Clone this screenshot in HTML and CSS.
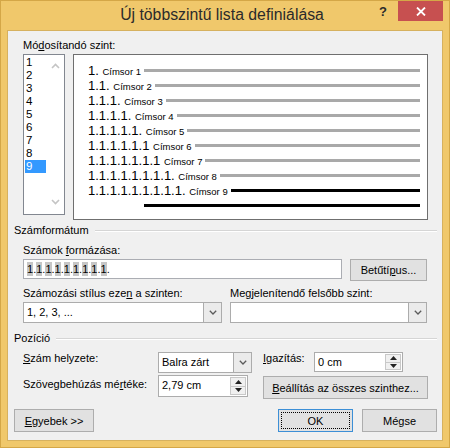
FILE: index.html
```html
<!DOCTYPE html>
<html lang="hu">
<head>
<meta charset="utf-8">
<title>Új többszintű lista definiálása</title>
<link rel="stylesheet" href="styles.css">
</head>
<body>
<div class="window">
  <div class="titlebar">
    <div></div>
    <div class="title">Új többszintű lista definiálása</div>
    <div class="controls">
      <span class="help">?</span>
      <div class="close"><svg width="10" height="9" viewBox="0 0 10 9"><path d="M1 0.5L9 8.5M9 0.5L1 8.5" stroke="#fff" stroke-width="1.8" fill="none"/></svg></div>
    </div>
  </div>

  <div class="client">
    <div class="sec-top">
      <div class="lbl">Mó<u>d</u>osítandó szint:</div>
      <div class="level-row">
        <div class="listbox">
          <div class="items">
            <div class="item">1</div>
            <div class="item">2</div>
            <div class="item">3</div>
            <div class="item">4</div>
            <div class="item">5</div>
            <div class="item">6</div>
            <div class="item">7</div>
            <div class="item">8</div>
            <div class="item sel">9</div>
          </div>
          <div class="vscroll">
            <svg width="9" height="6" viewBox="0 0 9 6"><path d="M1 5L4.5 1.5L8 5" stroke="#c4c4c4" stroke-width="1.6" fill="none"/></svg>
            <svg width="9" height="6" viewBox="0 0 9 6"><path d="M1 1L4.5 4.5L8 1" stroke="#c4c4c4" stroke-width="1.6" fill="none"/></svg>
          </div>
        </div>
        <div class="preview">
          <div class="prow"><span class="num">1.</span><span class="cap">Címsor 1</span><div class="bar"></div></div>
          <div class="prow"><span class="num">1.1.</span><span class="cap">Címsor 2</span><div class="bar"></div></div>
          <div class="prow"><span class="num">1.1.1.</span><span class="cap">Címsor 3</span><div class="bar"></div></div>
          <div class="prow"><span class="num">1.1.1.1.</span><span class="cap">Címsor 4</span><div class="bar"></div></div>
          <div class="prow"><span class="num">1.1.1.1.1.</span><span class="cap">Címsor 5</span><div class="bar"></div></div>
          <div class="prow"><span class="num">1.1.1.1.1.1</span><span class="cap">Címsor 6</span><div class="bar"></div></div>
          <div class="prow"><span class="num">1.1.1.1.1.1.1</span><span class="cap">Címsor 7</span><div class="bar"></div></div>
          <div class="prow"><span class="num">1.1.1.1.1.1.1.1.</span><span class="cap">Címsor 8</span><div class="bar"></div></div>
          <div class="prow"><span class="num">1.1.1.1.1.1.1.1.1.</span><span class="cap">Címsor 9</span><div class="bar dark"></div></div>
          <div class="prow"><div class="bar dark indent"></div></div>
        </div>
      </div>
    </div>

    <div class="group g1"><span>Számformátum</span><div class="rule"></div></div>

    <div class="sec">
      <div class="lbl lbl-gap">Számok <u>f</u>ormázása:</div>
      <div class="fmt-row">
        <div class="field fmt"><span class="sh">1</span>.<span class="sh">1</span>.<span class="sh">1</span>.<span class="sh">1</span>.<span class="sh">1</span>.<span class="sh">1</span>.<span class="sh">1</span>.<span class="sh">1</span>.<span class="sh">1</span>.</div>
        <div class="btn font-btn">Betűtí<u>p</u>us...</div>
      </div>
      <div class="two-col">
        <div class="col">
          <div class="lbl lbl-gap">Számozási stílus eze<u>n</u> a szinten:</div>
          <div class="combo"><span class="ctext">1, 2, 3, ...</span><span class="drop"><svg width="8" height="5" viewBox="0 0 8 5"><path d="M0.8 0.8L4 4L7.2 0.8" stroke="#5a5a5a" stroke-width="1.3" fill="none"/></svg></span></div>
        </div>
        <div class="col">
          <div class="lbl lbl-gap">Me<u>g</u>jelenítendő felsőbb szint:</div>
          <div class="combo"><span class="ctext"></span><span class="drop"><svg width="8" height="5" viewBox="0 0 8 5"><path d="M0.8 0.8L4 4L7.2 0.8" stroke="#5a5a5a" stroke-width="1.3" fill="none"/></svg></span></div>
        </div>
      </div>
    </div>

    <div class="group g2"><span>Pozíció</span><div class="rule"></div></div>

    <div class="pos-grid">
      <div class="lbl plbl"><u>S</u>zám helyzete:</div>
      <div class="combo small-combo"><span class="ctext">Balra zárt</span><span class="drop"><svg width="8" height="5" viewBox="0 0 8 5"><path d="M0.8 0.8L4 4L7.2 0.8" stroke="#5a5a5a" stroke-width="1.3" fill="none"/></svg></span></div>
      <div class="align-cell">
        <div class="lbl plbl align-lbl"><u>I</u>gazítás:</div>
        <div class="spin align-spin"><span class="ctext">0 cm</span><span class="spinbtns"><span class="sb"><svg width="7" height="4" viewBox="0 0 7 4"><path d="M0 4L3.5 0L7 4Z" fill="#222"/></svg></span><span class="sb"><svg width="7" height="4" viewBox="0 0 7 4"><path d="M0 0L3.5 4L7 0Z" fill="#222"/></svg></span></span></div>
      </div>
      <div class="lbl plbl2">Szövegbehúzás mé<u>r</u>téke:</div>
      <div class="spin indent-spin"><span class="ctext">2,79 cm</span><span class="spinbtns"><span class="sb"><svg width="7" height="4" viewBox="0 0 7 4"><path d="M0 4L3.5 0L7 4Z" fill="#222"/></svg></span><span class="sb"><svg width="7" height="4" viewBox="0 0 7 4"><path d="M0 0L3.5 4L7 0Z" fill="#222"/></svg></span></span></div>
      <div class="btn all-btn"><u>B</u>eállítás az összes szinthez...</div>
    </div>

    <div class="bottom">
      <div class="btn more-btn"><u>E</u>gyebek &gt;&gt;</div>
      <div class="spacer"></div>
      <div class="btn ok-btn"><span class="focus">OK</span></div>
      <div class="btn">Mégse</div>
    </div>
  </div>
</div>
</body>
</html>
```
FILE: styles.css
```css
html, body {
  margin: 0;
  padding: 0;
}

.window {
  width: 450px;
  height: 448px;
  box-sizing: border-box;
  border: 1px solid #d4a747;
  background: #f0c86b;
  display: flex;
  flex-direction: column;
  font-family: "Liberation Sans", Arial, sans-serif;
  font-size: 11px;
  color: #000;
}

.titlebar {
  height: 29px;
  flex: none;
  display: grid;
  grid-template-columns: 1fr auto 1fr;
  padding-right: 6px;
}

.title {
  font-size: 15.8px;
  line-height: 27px;
  color: #2b2b2b;
  white-space: nowrap;
}

.controls {
  justify-self: end;
  display: flex;
  align-items: flex-start;
}

.help {
  font-size: 13px;
  font-weight: bold;
  line-height: 16px;
  margin-top: 3px;
  margin-right: 11px;
  color: #2b2b2b;
}

.close {
  width: 45px;
  height: 20px;
  background: #c75050;
  display: flex;
  align-items: center;
  justify-content: center;
}

.client {
  flex: 1;
  margin: 0 6px 6px;
  background: #f0f0f0;
  border: 1px solid #d6b15f;
  padding-top: 7px;
  display: flex;
  flex-direction: column;
}

.lbl {
  line-height: 15px;
  white-space: nowrap;
}

u {
  text-decoration: underline;
  text-underline-offset: 1px;
}

.sec-top {
  padding-left: 15px;
}

.level-row {
  display: flex;
  align-items: flex-start;
  margin-top: 1px;
}

.listbox {
  width: 42px;
  height: 161px;
  box-sizing: border-box;
  border: 1px solid #828790;
  background: #fff;
  padding: 1px;
  display: flex;
}

.items {
  width: 21px;
}

.item {
  height: 13px;
  line-height: 13px;
  padding-left: 1px;
  font-size: 11.5px;
}

.item.sel {
  background: #3399ff;
  color: #fff;
}

.vscroll {
  flex: 1;
  display: flex;
  flex-direction: column;
  justify-content: space-between;
  align-items: center;
  padding: 7px 0 8px 1px;
}

.vscroll svg {
  display: block;
}

.preview {
  margin-left: 8px;
  width: 355px;
  height: 166px;
  box-sizing: border-box;
  border: 1px solid #6f6f6f;
  background: #fff;
  padding: 8px 7px 0 14px;
}

.prow {
  display: flex;
  align-items: baseline;
  height: 15px;
}

.num {
  font-size: 13px;
  line-height: 15px;
  white-space: nowrap;
}

.cap {
  font-size: 9.5px;
  line-height: 15px;
  margin-left: 3.6px;
  white-space: nowrap;
}

.bar {
  flex: 1;
  height: 3px;
  background: #a9a9a9;
  align-self: flex-start;
  margin-top: 6px;
  margin-left: 3px;
}

.bar.dark {
  background: #000;
}

.bar.indent {
  margin-left: 56px;
}

.group {
  display: flex;
  align-items: flex-start;
  padding-left: 6px;
  padding-right: 5px;
  line-height: 15px;
}

.group .rule {
  flex: 1;
  margin-top: 7px;
  margin-left: 6px;
  border-top: 1px solid #d5d5d5;
  border-bottom: 1px solid #fff;
}

.g1 {
  margin-top: 3px;
}

.g2 {
  margin-top: 8px;
}

.sec {
  padding-left: 15px;
}

.lbl-gap {
  margin-top: 5px;
  margin-bottom: 1px;
}

.fmt-row {
  display: flex;
  align-items: flex-start;
}

.field {
  box-sizing: border-box;
  border: 1px solid #abadb3;
  background: #fff;
}

.fmt {
  width: 319px;
  height: 20px;
  padding: 2px 0 0 3px;
  font-size: 11px;
  line-height: 15px;
  white-space: nowrap;
}

.sh {
  background: #c6c6c6;
  display: inline-block;
  line-height: 14px;
}

.btn {
  box-sizing: border-box;
  height: 23px;
  border: 1px solid #adadad;
  background: #e1e1e1;
  display: flex;
  align-items: center;
  justify-content: center;
  white-space: nowrap;
}

.font-btn {
  width: 77px;
  height: 22px;
  margin-left: 8px;
}

.two-col {
  display: flex;
  gap: 8px;
}

.col:first-child {
  width: 199px;
}

.col:last-child {
  width: 197px;
}

.combo,
.spin {
  box-sizing: border-box;
  height: 21px;
  border: 1px solid #acacac;
  background: #fff;
  display: flex;
}

.ctext {
  flex: 1;
  padding-left: 3px;
  line-height: 19px;
  white-space: nowrap;
}

.drop {
  width: 17px;
  border-left: 1px solid #acacac;
  background: #ebebeb;
  display: flex;
  align-items: center;
  justify-content: center;
}

.pos-grid {
  margin-top: 6px;
  padding-left: 15px;
  display: grid;
  grid-template-columns: 135px 94px 1fr;
  grid-template-rows: 20px 23px;
  row-gap: 3px;
}

.plbl {
  align-self: start;
  margin-top: -1px;
}

.plbl2 {
  align-self: start;
  margin-top: 2px;
}

.small-combo {
  height: 21px;
}

.align-cell {
  margin-left: 11px;
  display: flex;
  align-items: flex-start;
}

.align-lbl {
  width: 51px;
}

.align-spin {
  width: 89px;
  height: 20px;
}

.indent-spin {
  width: 90px;
  height: 22px;
}

.spinbtns {
  width: 16px;
  display: flex;
  flex-direction: column;
  padding: 1px 1px 1px 0;
}

.sb {
  flex: 1;
  border: 1px solid #c8c8c8;
  background: #f0f0f0;
  display: flex;
  align-items: center;
  justify-content: center;
}

.sb + .sb {
  border-top: none;
}

.all-btn {
  margin-left: 11px;
  margin-top: 1px;
  width: 165px;
  height: 23px;
}

.bottom {
  margin-top: 11px;
  display: flex;
  padding: 0 5px 0 6px;
  gap: 9px;
}

.spacer {
  flex: 1;
}

.bottom .btn {
  width: 75px;
}

.bottom .more-btn {
  width: 80px;
}

.ok-btn {
  border-color: #3c8fd6;
  padding: 2px;
}

.focus {
  flex: 1;
  align-self: stretch;
  border: 1px dotted #000;
  display: flex;
  align-items: center;
  justify-content: center;
}
```
